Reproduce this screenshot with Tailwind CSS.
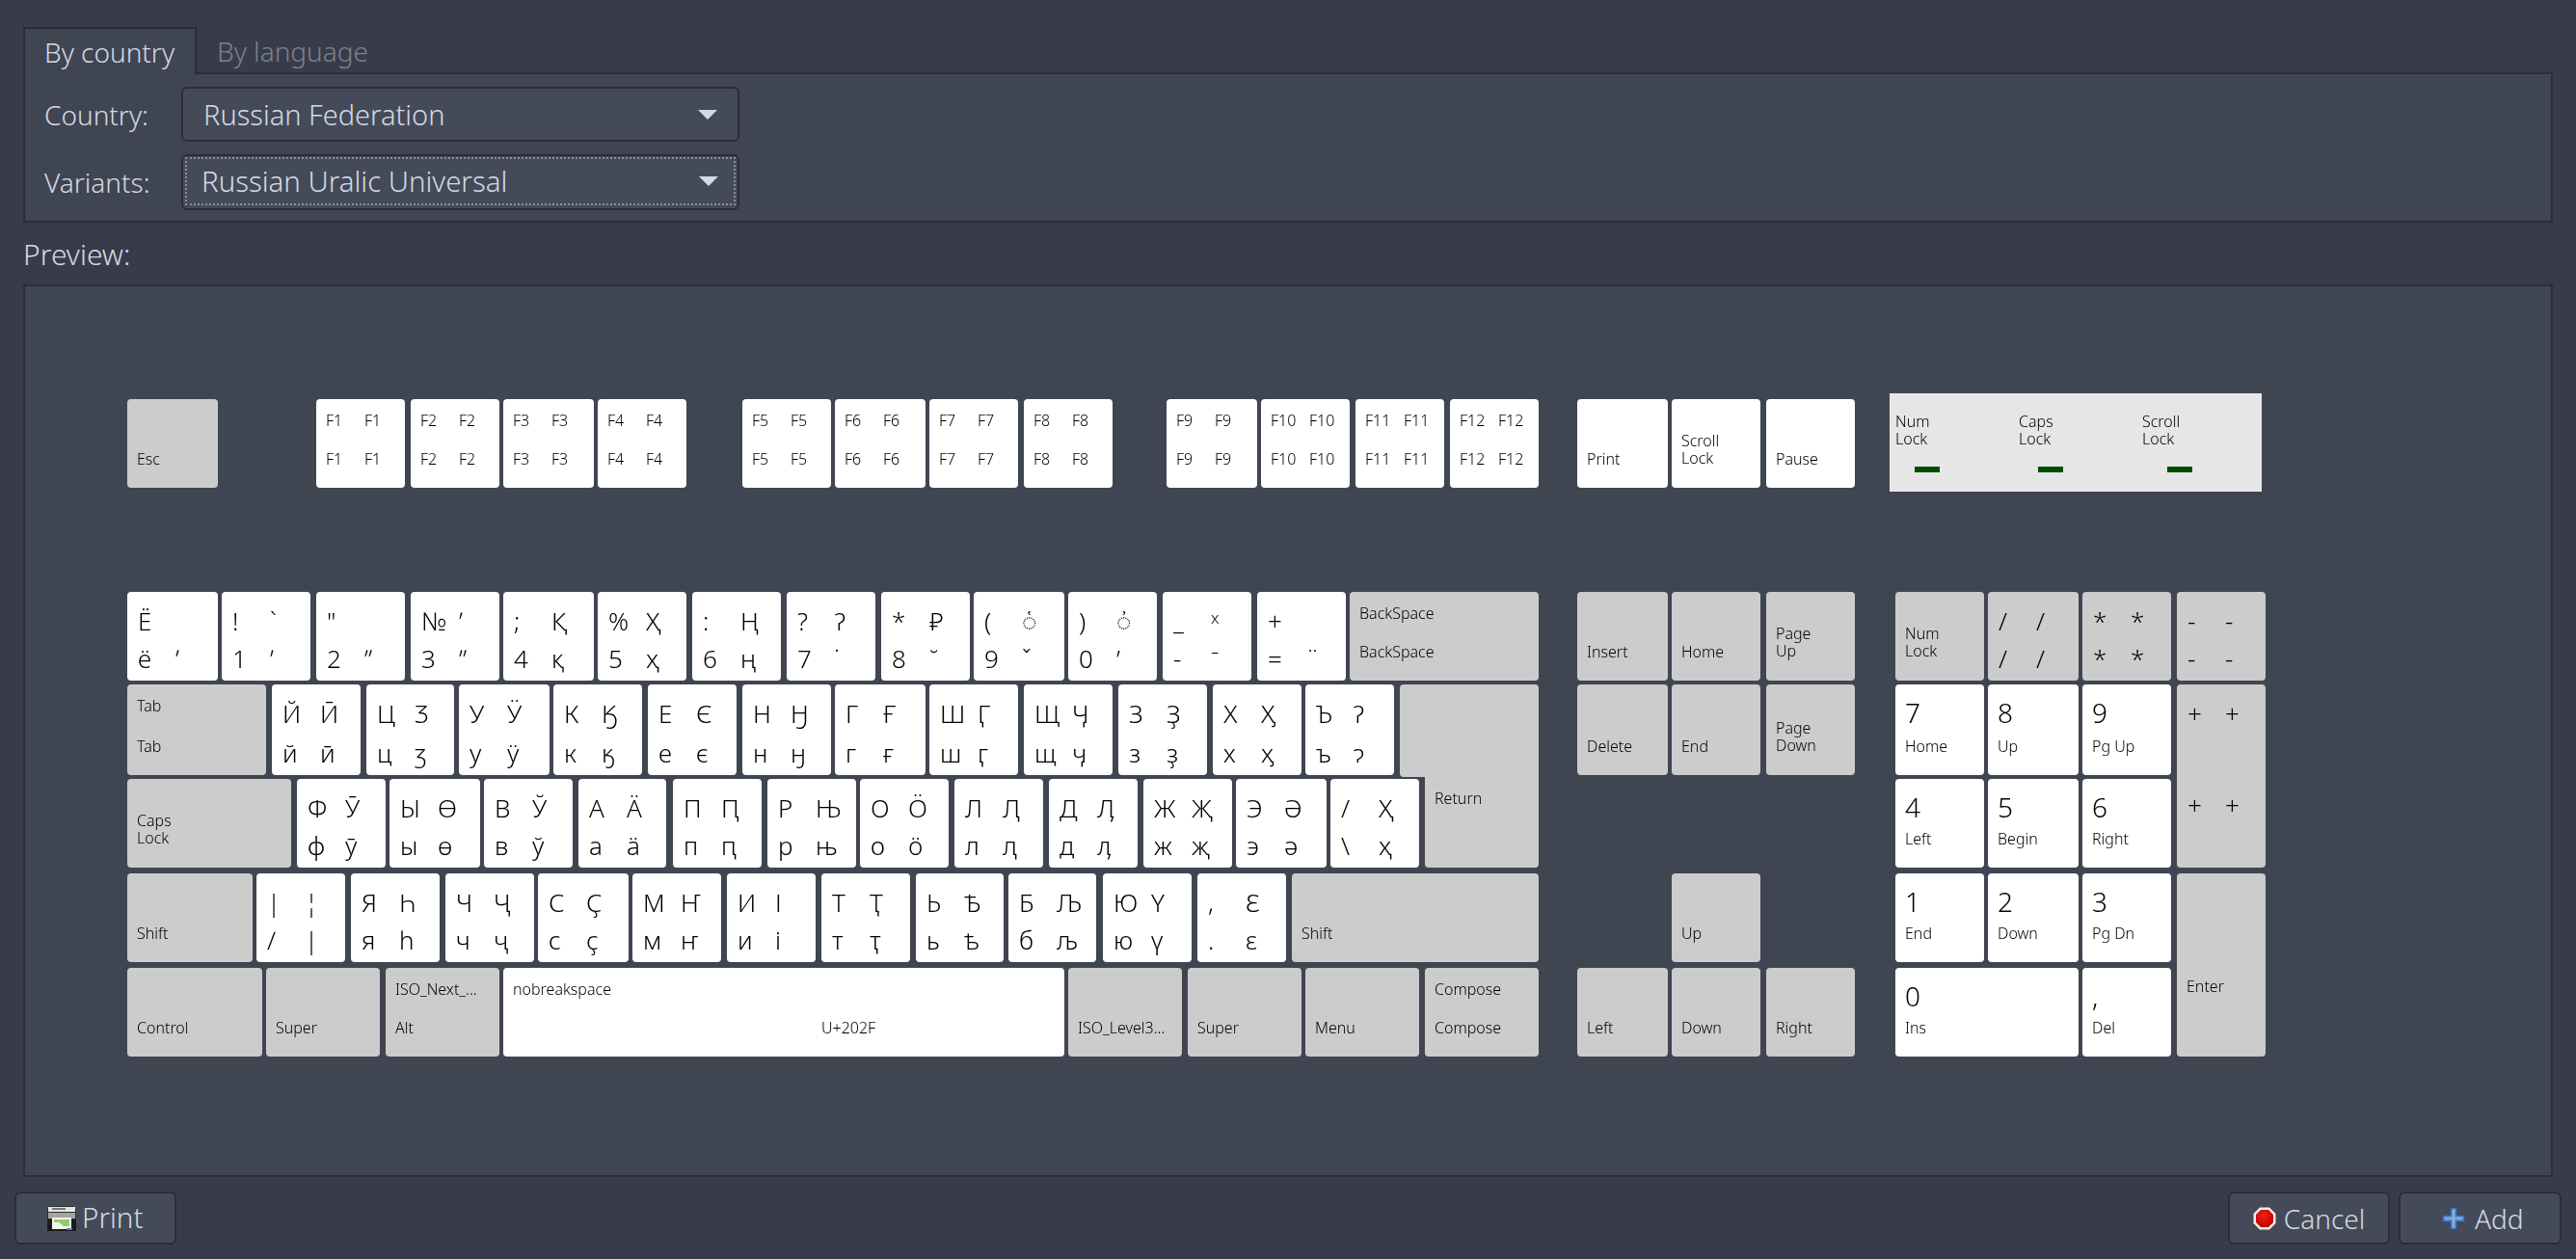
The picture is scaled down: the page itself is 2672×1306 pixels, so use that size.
<!DOCTYPE html>
<html lang="en">
<head>
  <meta charset="UTF-8">
  <title>Keyboard Layout</title>
  <script src="https://cdn.jsdelivr.net/npm/@tailwindcss/browser@4"></script>
</head>
<body class="bg-[#383c4a] text-[#d3dae3] font-['Noto_Sans',sans-serif] font-light text-[28px] w-[2672px] h-[1306px] overflow-hidden">
  <div class="flex flex-col h-[1306px]">

    <!-- Tabs -->
    <div class="mt-[28px] ml-[24px] mr-[24px]">
      <div class="flex h-[49px] items-center">
        <div class="relative z-10 w-[180px] h-[49px] pl-[20px] bg-[#404552] border-2 border-b-0 border-[#2b2e39] flex items-center">By country</div>
        <div class="pl-[21px] text-[#7c818c]">By language</div>
      </div>
      <div class="-mt-[2px] h-[156px] bg-[#404552] border-2 border-[#2b2e39] pl-[20px] pt-[13px]">
        <div class="flex items-center h-[57px]">
          <span class="w-[142px]">Country:</span>
          <div class="w-[579px] h-[57px] rounded-[6px] border-2 border-[#2b2e39] bg-[#444a58] flex items-center justify-between pl-[21px] pr-[21px]">
            <span class="text-[29px]">Russian Federation</span>
            <svg width="20" height="10" viewBox="0 0 20 10"><path d="M0 0H20L10 10Z" fill="#d3dae3"/></svg>
          </div>
        </div>
        <div class="flex items-center h-[58px] mt-[13px]">
          <span class="w-[142px]">Variants:</span>
          <div class="w-[579px] h-[58px] rounded-[6px] border-2 border-[#2b2e39] bg-[#444a58] px-[2px] pt-[1px] pb-[3px]">
            <div class="h-full border-2 border-dotted border-[#8a8f9b] flex items-center justify-between pl-[15px] pr-[16px]">
              <span class="text-[29.4px]">Russian Uralic Universal</span>
              <svg width="20" height="10" viewBox="0 0 20 10"><path d="M0 0H20L10 10Z" fill="#d3dae3"/></svg>
            </div>
          </div>
        </div>
      </div>
    </div>

    <div class="ml-[24px] h-[64px] flex items-center text-[30px]">Preview:</div>

    <!-- Keyboard preview -->
    <div id="preview" class="relative ml-[24px] mr-[24px] h-[926px] bg-[#404552] border-2 border-[#2b2e39]"></div>

    <!-- Bottom buttons -->
    <div class="flex justify-between mt-[15px] ml-[15px] mr-[15px]">
      <div class="w-[168px] h-[55px] rounded-[6px] border-2 border-[#2b2e39] bg-[#444a58] flex items-center pl-[31px] gap-[5px]">
        <svg width="32" height="26" viewBox="0 0 32 26">
          <path d="M4 0H28L31 3V15H1V3Z" fill="#2e3033"/>
          <rect x="2" y="1" width="28" height="5" fill="#e4e4e0"/>
          <rect x="6" y="2" width="14" height="2" fill="#77787a"/>
          <rect x="2" y="7" width="28" height="6" fill="#a5a5a0"/>
          <rect x="1" y="14" width="30" height="12" fill="#191b1e"/>
          <rect x="6" y="12" width="20" height="12" fill="#f2f5ec"/>
          <path d="M8 14H24V21H18L13 17H8Z" fill="#93cb70"/>
          <rect x="21" y="23" width="6" height="2" fill="#4c7fc0"/>
        </svg>
        <span class="text-[29.5px]">Print</span>
      </div>
      <div class="flex gap-[9px]">
        <div class="w-[168px] h-[55px] rounded-[6px] border-2 border-[#2b2e39] bg-[#444a58] flex items-center justify-center gap-[8px]">
          <svg width="24" height="24" viewBox="0 0 24 24">
            <defs>
              <radialGradient id="stopFill" cx="0.45" cy="0.35" r="0.7">
                <stop offset="0" stop-color="#f4201c"/>
                <stop offset="1" stop-color="#b80000"/>
              </radialGradient>
            </defs>
            <path d="M7 0.5H17L23.5 7V17L17 23.5H7L0.5 17V7Z" fill="#f2eee2"/>
            <path d="M8 3H16L21 8V16L16 21H8L3 16V8Z" fill="url(#stopFill)"/>
          </svg>
          <span>Cancel</span>
        </div>
        <div class="w-[169px] h-[55px] rounded-[6px] border-2 border-[#2b2e39] bg-[#444a58] flex items-center pl-[43px] gap-[10px]">
          <svg width="24" height="24" viewBox="0 0 24 24">
            <path d="M8.5 0.5H15.5V8.5H23.5V15.5H15.5V23.5H8.5V15.5H0.5V8.5H8.5Z" fill="#2f5a99"/>
            <path d="M9.5 1.5H14.5V9.5H22.5V14.5H14.5V22.5H9.5V14.5H1.5V9.5H9.5Z" fill="#5f8fd0"/>
            <path d="M11 3H13V11H21V12.5H13V21H11V12.5H3V11H11Z" fill="#8bb0e2"/>
          </svg>
          <span>Add</span>
        </div>
      </div>
    </div>
  </div>

  <script>
    // preview's inner corner on the page, the key tables below use page coordinates
    const originX = 26;
    const originY = 297;
    const preview = document.getElementById('preview');

    const bigClass = 'absolute whitespace-nowrap text-[26px] leading-[32px] will-change-transform';
    const smallClass = 'absolute whitespace-pre-line font-[350] text-[16px] leading-[18px] will-change-transform';

    function label(key, text, cls, left, vert) {
      if (!text) return;
      const el = document.createElement('span');
      el.className = cls;
      el.textContent = text;
      el.style.left = left + 'px';
      for (const side in vert) el.style[side] = vert[side] + 'px';
      key.appendChild(el);
    }

    // a single line sits a pixel lower than a two line label
    function smallBottomOf(text) {
      return { bottom: text && text.includes('\n') ? 22 : 21 };
    }

    // type: w = big white, g = small grey, f = small white, p = big grey, n = numpad
    function addKey(y1, y2, k, extra) {
      const [x1, x2, type, tl, tr, bl, br] = k;
      const key = document.createElement('div');
      key.className = 'absolute rounded-[4px] text-black ' +
        (type === 'g' || type === 'p' ? 'bg-[#cccccc]' : 'bg-white');
      key.style.left = (x1 - originX) + 'px';
      key.style.top = (y1 - originY) + 'px';
      key.style.width = (x2 - x1) + 'px';
      key.style.height = (y2 - y1) + 'px';

      const opts = extra || {};
      const bigTop = { top: 14 };
      const bigBottom = { bottom: opts.bottom || 7 };
      const smallTop = { top: 13 };
      const right = opts.right || 50;

      if (type === 'w' || type === 'p') {
        label(key, tl, bigClass, 11, bigTop);
        label(key, tr, bigClass, right, bigTop);
        label(key, bl, bigClass, 11, bigBottom);
        label(key, br, bigClass, right, bigBottom);
      } else if (type === 'n') {
        label(key, tl, 'absolute text-[28px] leading-[32px] will-change-transform', 10, { top: 13 });
        label(key, bl, smallClass, 10, smallBottomOf(bl));
      } else {
        label(key, tl, smallClass, 10, smallTop);
        label(key, tr, smallClass, right, smallTop);
        label(key, bl, smallClass, 10, opts.midTop ? { top: opts.midTop } : smallBottomOf(bl));
        label(key, br, smallClass, right, smallBottomOf(br));
      }
      preview.appendChild(key);
    }

    const rows = [
      [414, 506, [
        [132, 226, 'g', '', '', 'Esc'],
        [328, 420, 'f', 'F1', 'F1', 'F1', 'F1'],
        [426, 518, 'f', 'F2', 'F2', 'F2', 'F2'],
        [522, 616, 'f', 'F3', 'F3', 'F3', 'F3'],
        [620, 712, 'f', 'F4', 'F4', 'F4', 'F4'],
        [770, 862, 'f', 'F5', 'F5', 'F5', 'F5'],
        [866, 960, 'f', 'F6', 'F6', 'F6', 'F6'],
        [964, 1056, 'f', 'F7', 'F7', 'F7', 'F7'],
        [1062, 1154, 'f', 'F8', 'F8', 'F8', 'F8'],
        [1210, 1304, 'f', 'F9', 'F9', 'F9', 'F9'],
        [1308, 1400, 'f', 'F10', 'F10', 'F10', 'F10'],
        [1406, 1498, 'f', 'F11', 'F11', 'F11', 'F11'],
        [1504, 1596, 'f', 'F12', 'F12', 'F12', 'F12'],
        [1636, 1730, 'f', '', '', 'Print'],
        [1734, 1826, 'f', '', '', 'Scroll\nLock'],
        [1832, 1924, 'f', '', '', 'Pause'],
      ]],
      [614, 706, [
        [132, 226, 'w', 'Ё', '', 'ё', 'ʹ'],
        [230, 322, 'w', '!', '`', '1', 'ʹ'],
        [328, 420, 'w', '"', '', '2', 'ʺ'],
        [426, 518, 'w', '№', 'ʹ', '3', 'ʺ'],
        [522, 616, 'w', ';', 'Қ', '4', 'қ'],
        [620, 712, 'w', '%', 'Ҳ', '5', 'ҳ'],
        [718, 810, 'w', ':', 'Ң', '6', 'ң'],
        [816, 908, 'w', '?', 'Ɂ', '7', '˙'],
        [914, 1006, 'w', '*', '₽', '8', '˘'],
        [1010, 1104, 'w', '(', '◌҅', '9', 'ˇ'],
        [1108, 1200, 'w', ')', '◌҆', '0', '’'],
        [1206, 1298, 'w', '_', 'ˣ', '-', '⁻'],
        [1304, 1396, 'w', '+', '', '=', '¨'],
        [1400, 1596, 'g', 'BackSpace', '', 'BackSpace'],
        [1636, 1730, 'g', '', '', 'Insert'],
        [1734, 1826, 'g', '', '', 'Home'],
        [1832, 1924, 'g', '', '', 'Page\nUp'],
        [1966, 2058, 'g', '', '', 'Num\nLock'],
        [2062, 2156, 'p', '/', '/', '/', '/'],
        [2160, 2252, 'p', '*', '*', '*', '*'],
        [2258, 2350, 'p', '-', '-', '-', '-'],
      ]],
      [710, 804, [
        [132, 276, 'g', 'Tab', '', 'Tab'],
        [282, 374, 'w', 'Й', 'Ӣ', 'й', 'ӣ'],
        [380, 471, 'w', 'Ц', 'Ӡ', 'ц', 'ӡ'],
        [476, 570, 'w', 'У', 'Ӱ', 'у', 'ӱ'],
        [574, 666, 'w', 'К', 'Ӄ', 'к', 'ӄ'],
        [672, 764, 'w', 'Е', 'Є', 'е', 'є'],
        [770, 862, 'w', 'Н', 'Ӈ', 'н', 'ӈ'],
        [866, 960, 'w', 'Г', 'Ғ', 'г', 'ғ'],
        [964, 1056, 'w', 'Ш', 'Ӷ', 'ш', 'ӷ'],
        [1062, 1154, 'w', 'Щ', 'Ӌ', 'щ', 'ӌ'],
        [1160, 1252, 'w', 'З', 'Ҙ', 'з', 'ҙ'],
        [1258, 1350, 'w', 'Х', 'Ӽ', 'х', 'ӽ'],
        [1354, 1446, 'w', 'Ъ', 'Ɂ', 'ъ', 'ɂ'],
        [1636, 1730, 'g', '', '', 'Delete'],
        [1734, 1826, 'g', '', '', 'End'],
        [1832, 1924, 'g', '', '', 'Page\nDown'],
        [1966, 2058, 'n', '7', '', 'Home'],
        [2062, 2156, 'n', '8', '', 'Up'],
        [2160, 2252, 'n', '9', '', 'Pg Up'],
      ]],
      [808, 900, [
        [132, 302, 'g', '', '', 'Caps\nLock'],
        [308, 400, 'w', 'Ф', 'Ӯ', 'ф', 'ӯ'],
        [404, 498, 'w', 'Ы', 'Ө', 'ы', 'ө'],
        [502, 594, 'w', 'В', 'Ў', 'в', 'ў'],
        [600, 691, 'w', 'А', 'Ӓ', 'а', 'ӓ'],
        [698, 790, 'w', 'П', 'Ԥ', 'п', 'ԥ'],
        [796, 888, 'w', 'Р', 'Њ', 'р', 'њ'],
        [892, 984, 'w', 'О', 'Ӧ', 'о', 'ӧ'],
        [990, 1082, 'w', 'Л', 'Ԯ', 'л', 'ԯ'],
        [1088, 1180, 'w', 'Д', 'Ӆ', 'д', 'ӆ'],
        [1186, 1278, 'w', 'Ж', 'Җ', 'ж', 'җ'],
        [1282, 1376, 'w', 'Э', 'Ә', 'э', 'ә'],
        [1380, 1472, 'w', '/', 'Ҳ', '\\', 'ҳ'],
        [1966, 2058, 'n', '4', '', 'Left'],
        [2062, 2156, 'n', '5', '', 'Begin'],
        [2160, 2252, 'n', '6', '', 'Right'],
      ]],
      [906, 998, [
        [132, 262, 'g', '', '', 'Shift'],
        [266, 358, 'w', '|', '¦', '/', '|'],
        [364, 456, 'w', 'Я', 'Һ', 'я', 'һ'],
        [462, 554, 'w', 'Ч', 'Ҷ', 'ч', 'ҷ'],
        [558, 652, 'w', 'С', 'Ҫ', 'с', 'ҫ'],
        [656, 748, 'w', 'М', 'Ҥ', 'м', 'ҥ'],
        [754, 846, 'w', 'И', 'І', 'и', 'і'],
        [852, 944, 'w', 'Т', 'Ҭ', 'т', 'ҭ'],
        [950, 1041, 'w', 'Ь', 'Ѣ', 'ь', 'ѣ'],
        [1046, 1137, 'w', 'Б', 'Љ', 'б', 'љ'],
        [1144, 1236, 'w', 'Ю', 'Ү', 'ю', 'ү'],
        [1242, 1334, 'w', ',', 'Ɛ', '.', 'ɛ'],
        [1340, 1596, 'g', '', '', 'Shift'],
        [1734, 1826, 'g', '', '', 'Up'],
        [1966, 2058, 'n', '1', '', 'End'],
        [2062, 2156, 'n', '2', '', 'Down'],
        [2160, 2252, 'n', '3', '', 'Pg Dn'],
      ]],
      [1004, 1096, [
        [132, 272, 'g', '', '', 'Control'],
        [276, 394, 'g', '', '', 'Super'],
        [400, 518, 'g', 'ISO_Next_...', '', 'Alt'],
        [1108, 1226, 'g', '', '', 'ISO_Level3...'],
        [1232, 1350, 'g', '', '', 'Super'],
        [1354, 1472, 'g', '', '', 'Menu'],
        [1478, 1596, 'g', 'Compose', '', 'Compose'],
        [1636, 1730, 'g', '', '', 'Left'],
        [1734, 1826, 'g', '', '', 'Down'],
        [1832, 1924, 'g', '', '', 'Right'],
        [1966, 2156, 'n', '0', '', 'Ins'],
        [2160, 2252, 'n', ',', '', 'Del'],
      ]],
    ];

    rows.forEach(([y1, y2, keys]) => keys.forEach(k => addKey(y1, y2, k)));

    // keys that don't sit on one row
    addKey(1004, 1096, [522, 1104, 'f', 'nobreakspace', '', '', 'U+202F'], { right: 330 });
    addKey(710, 900, [2258, 2350, 'p', '+', '+', '+', '+'], { bottom: 49 });
    addKey(906, 1096, [2258, 2350, 'g', '', '', 'Enter'], { midTop: 108 });
    addKey(710, 806, [1452, 1596, 'g']);
    addKey(800, 900, [1478, 1596, 'g', '', '', 'Return'], { midTop: 19 });

    // lock indicators
    const leds = document.createElement('div');
    leds.className = 'absolute bg-[#e6e6e6]';
    leds.style.left = (1960 - originX) + 'px';
    leds.style.top = (408 - originY) + 'px';
    leds.style.width = '386px';
    leds.style.height = '102px';
    [['Num\nLock', 6, 26], ['Caps\nLock', 134, 154], ['Scroll\nLock', 262, 288]].forEach(([text, textX, ledX]) => {
      label(leds, text, smallClass + ' text-black', textX, { top: 20 });
      const led = document.createElement('div');
      led.className = 'absolute w-[26px] h-[6px] bg-[#004d00]';
      led.style.left = ledX + 'px';
      led.style.top = '76px';
      leds.appendChild(led);
    });
    preview.appendChild(leds);
  </script>
</body>
</html>
